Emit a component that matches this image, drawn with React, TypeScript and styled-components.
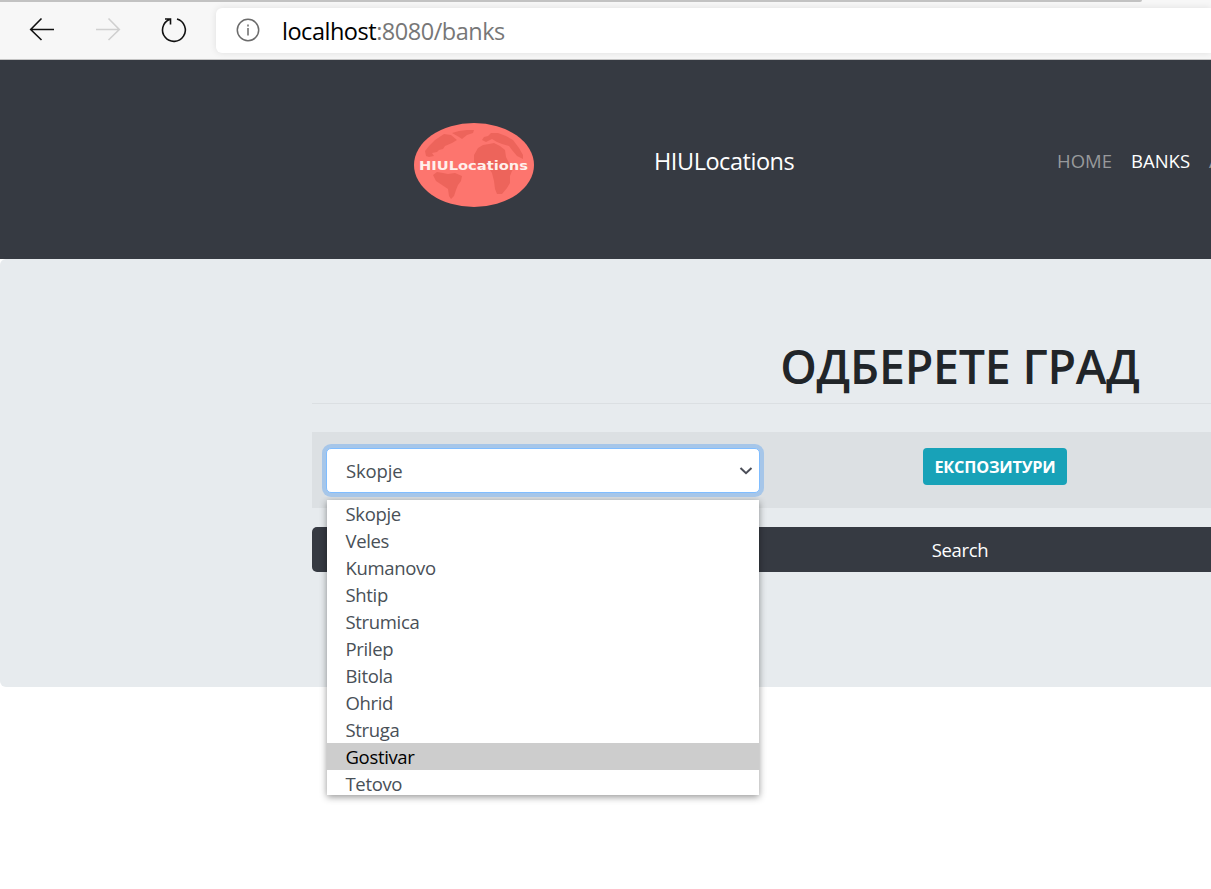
import React from "react";
import styled, { createGlobalStyle } from "styled-components";

const GlobalStyle = createGlobalStyle`
  *, *::before, *::after { box-sizing: border-box; }
  html, body { margin: 0; background: #fff; overflow: hidden; }
  body { font-family: "Open Sans", "Noto Sans", sans-serif; font-size: 18.5px; color: #212529; }
`;

const Window = styled.div`
  width: 100%;
  height: 889px;
  overflow: hidden;
`;

const Toolbar = styled.header`
  height: 60px;
  display: flex;
  flex-direction: column;
  background: #f7f7f7;
  border-bottom: 1px solid #c4c4c4;
  overflow: hidden;
`;

const TabEdge = styled.div`
  width: 1142px;
  height: 2px;
  flex: none;
  background: #c2c2c2;
  border-bottom-right-radius: 2px;
`;

const Controls = styled.div`
  display: flex;
  align-items: flex-start;
  padding: 6px 0 0 26px;
`;

const NavIcon = styled.svg<{ $color?: string }>`
  flex: none;
  width: 32px;
  height: 32px;
  margin: 6px 34px 0 0;
  fill: none;
  stroke: ${(p) => p.$color || "#111"};
  stroke-width: 1.6;
`;

const AddressBar = styled.div`
  flex: 1;
  height: 45px;
  margin-left: -8px;
  padding-left: 20px;
  display: flex;
  align-items: center;
  background: #fff;
  border-radius: 6px 0 0 6px;
  box-shadow: 0 0 7px rgba(0, 0, 0, 0.1);
`;

const InfoIcon = styled.svg`
  width: 24px;
  height: 24px;
  margin: -1px 22px 0 0;
  fill: none;
  stroke: #6b6b6b;
  stroke-width: 1.5;
`;

const Url = styled.span`
  font-size: 23.5px;
  letter-spacing: -0.48px;
  line-height: 45px;
  color: #777;
  padding-top: 1px;
  b { font-weight: 400; color: #000; }
`;

const Navbar = styled.nav`
  width: 1920px;
  height: 199px;
  display: flex;
  align-items: flex-start;
  padding-left: 414px;
  background: #363a42;
  color: #fff;
`;

const Logo = styled.svg`
  width: 120px;
  height: 84px;
  margin-top: 63px;
`;

const LogoText = styled.text`
  font: 700 13px "DejaVu Sans", sans-serif;
  fill: #fff0ec;
`;

const Brand = styled.a`
  width: 403px;
  margin: 83px 0 0 120px;
  font-size: 23.5px;
  line-height: 36px;
  letter-spacing: -0.46px;
`;

const NavLink = styled.a<{ $active?: boolean; $width: number }>`
  width: ${(p) => p.$width}px;
  margin: 87px 19px 0 0;
  line-height: 28px;
  letter-spacing: 0;
  white-space: nowrap;
  color: ${(p) => (p.$active ? "#fff" : "#98999b")};
`;

const Jumbotron = styled.main`
  width: 1920px;
  height: 428px;
  padding: 77px 312px 0;
  background: #e7ebee;
  border-radius: 6px;
`;

const Title = styled.h1`
  height: 68px;
  margin: 0;
  font-size: 46.5px;
  font-weight: 600;
  line-height: 60px;
  text-align: center;
  letter-spacing: -0.2px;
  border-bottom: 1px solid #dbdfe2;
`;

const FormRow = styled.div`
  display: flex;
  align-items: flex-start;
  height: 76px;
  margin-top: 28px;
  padding: 16px 14px;
  background: #dce0e3;
`;

const SelectWrap = styled.div`
  position: relative;
  flex: none;
  width: 434px;
`;

const SelectBox = styled.button`
  display: flex;
  align-items: center;
  justify-content: space-between;
  width: 100%;
  height: 45px;
  padding: 0 6px 0 19px;
  font: inherit;
  letter-spacing: -0.15px;
  color: #495057;
  background: #fff;
  border: 1px solid #80bdff;
  border-radius: 5px;
  box-shadow: 0 0 0 4px #a6c6e9;
`;

const Chevron = styled.svg`
  width: 14px;
  height: 10px;
  fill: none;
  stroke: #4a4d57;
  stroke-width: 2;
`;

const Menu = styled.ul`
  position: absolute;
  z-index: 2;
  top: 52px;
  left: 1px;
  width: 432px;
  height: 295px;
  margin: 0;
  padding: 0;
  list-style: none;
  background: #fff;
  box-shadow: 0 2px 7px rgba(0, 0, 0, 0.42);
  clip-path: inset(-3px -12px -12px -12px);
`;

const MenuClip = styled.div`
  height: 295px;
  overflow: hidden;
`;

const Option = styled.li<{ $hover?: boolean }>`
  height: 27px;
  padding-left: 18.500px;
  line-height: 28px;
  letter-spacing: -0.34px;
  color: ${(p) => (p.$hover ? "#000" : "#495057")};
  background: ${(p) => (p.$hover ? "#cdcdcd" : "transparent")};
`;

const Badge = styled.span`
  height: 37px;
  width: 144px;
  margin-left: 163px;
  font-size: 16.3px;
  font-weight: 700;
  line-height: 38px;
  letter-spacing: -0.2px;
  text-align: center;
  color: #fff;
  background: #18a2b8;
  border-radius: 4px;
`;

const SearchButton = styled.button`
  display: block;
  width: 100%;
  height: 45px;
  margin-top: 19px;
  padding: 0;
  font: inherit;
  letter-spacing: -0.34px;
  color: #fff;
  background: #363a42;
  border: 0;
  border-radius: 5px;
`;

const cities = ["Skopje", "Veles", "Kumanovo", "Shtip", "Strumica", "Prilep", "Bitola", "Ohrid", "Struga", "Gostivar", "Tetovo"];

function GlobeLogo() {
  return (
    <Logo viewBox="0 0 120 84">
      <ellipse cx="60" cy="42" rx="60" ry="42" fill="#fd756e" />
      <g fill="#ed645b">
        <path d="M12 33 11 28 15 23 21 17 30 11 37 12 43 17 38 20 31 23 29 26 25 27 23 29 18 30 20 33 15 34Z" />
        <path d="M38 10 45 8 53 7 60 7 59 10 53 12 48 16 45 14Z" />
        <path d="M19 52 23 49 29 50 34 51 41 50 48 53 47 58 44 62 42 67 40 73 37 76 35 73 34 66 28 62 22 58Z" />
        <path d="M60 32 64 25 69 22 75 21 80 20 86 23 91 27 92 34 95 40 102 42 98 48 96 53 96 60 93 65 88 71 83 71 81 66 80 58 78 50 74 44 66 45 60 40Z" />
        <path d="M68 17 70 14 74 13 77 10 84 10 92 13 99 17 105 25 109 32 109 36 103 33 98 27 95 23 88 21 83 19 78 16 72 19Z" />
      </g>
      <LogoText x="5" y="47" textLength="109" lengthAdjust="spacingAndGlyphs">HIULocations</LogoText>
    </Logo>
  );
}

export default function App() {
  return (
    <Window>
      <GlobalStyle />
      <Toolbar>
        <TabEdge />
        <Controls>
          <NavIcon viewBox="0 0 32 32"><path d="M28 15.500H5M15.500 4.500 4.700 15.500l10.800 10.500" /></NavIcon>
          <NavIcon viewBox="0 0 32 32" $color="#d0d0d0"><path d="M4 15.500h23M16.500 4.500l10.800 11-10.800 10.500" /></NavIcon>
          <NavIcon viewBox="0 0 32 32"><path d="M19 5a11.400 11.400 0 1 1-7.600.5M7 5h5.500v5.500" /></NavIcon>
          <AddressBar>
            <InfoIcon viewBox="0 0 24 24">
              <circle cx="12" cy="12" r="10.7" />
              <path d="M12 10v7.500M12 6.500v2" />
            </InfoIcon>
            <Url><b>localhost</b>:8080/banks</Url>
          </AddressBar>
        </Controls>
      </Toolbar>
      <Navbar>
        <GlobeLogo />
        <Brand>HIULocations</Brand>
        <NavLink $width={55}>HOME</NavLink>
        <NavLink $width={59} $active>BANKS</NavLink>
        <NavLink $width={60}>ATMS</NavLink>
      </Navbar>
      <Jumbotron>
        <Title>ОДБЕРЕТЕ ГРАД</Title>
        <FormRow>
          <SelectWrap>
            <SelectBox>
              Skopje
              <Chevron viewBox="0 0 14 10"><path d="m1.500 2 5.500 5.200L12.500 2" /></Chevron>
            </SelectBox>
            <Menu>
              <MenuClip>
                {cities.map((city) => (
                  <Option key={city} $hover={city === "Gostivar"}>{city}</Option>
                ))}
              </MenuClip>
            </Menu>
          </SelectWrap>
          <Badge>ЕКСПОЗИТУРИ</Badge>
        </FormRow>
        <SearchButton>Search</SearchButton>
      </Jumbotron>
    </Window>
  );
}
